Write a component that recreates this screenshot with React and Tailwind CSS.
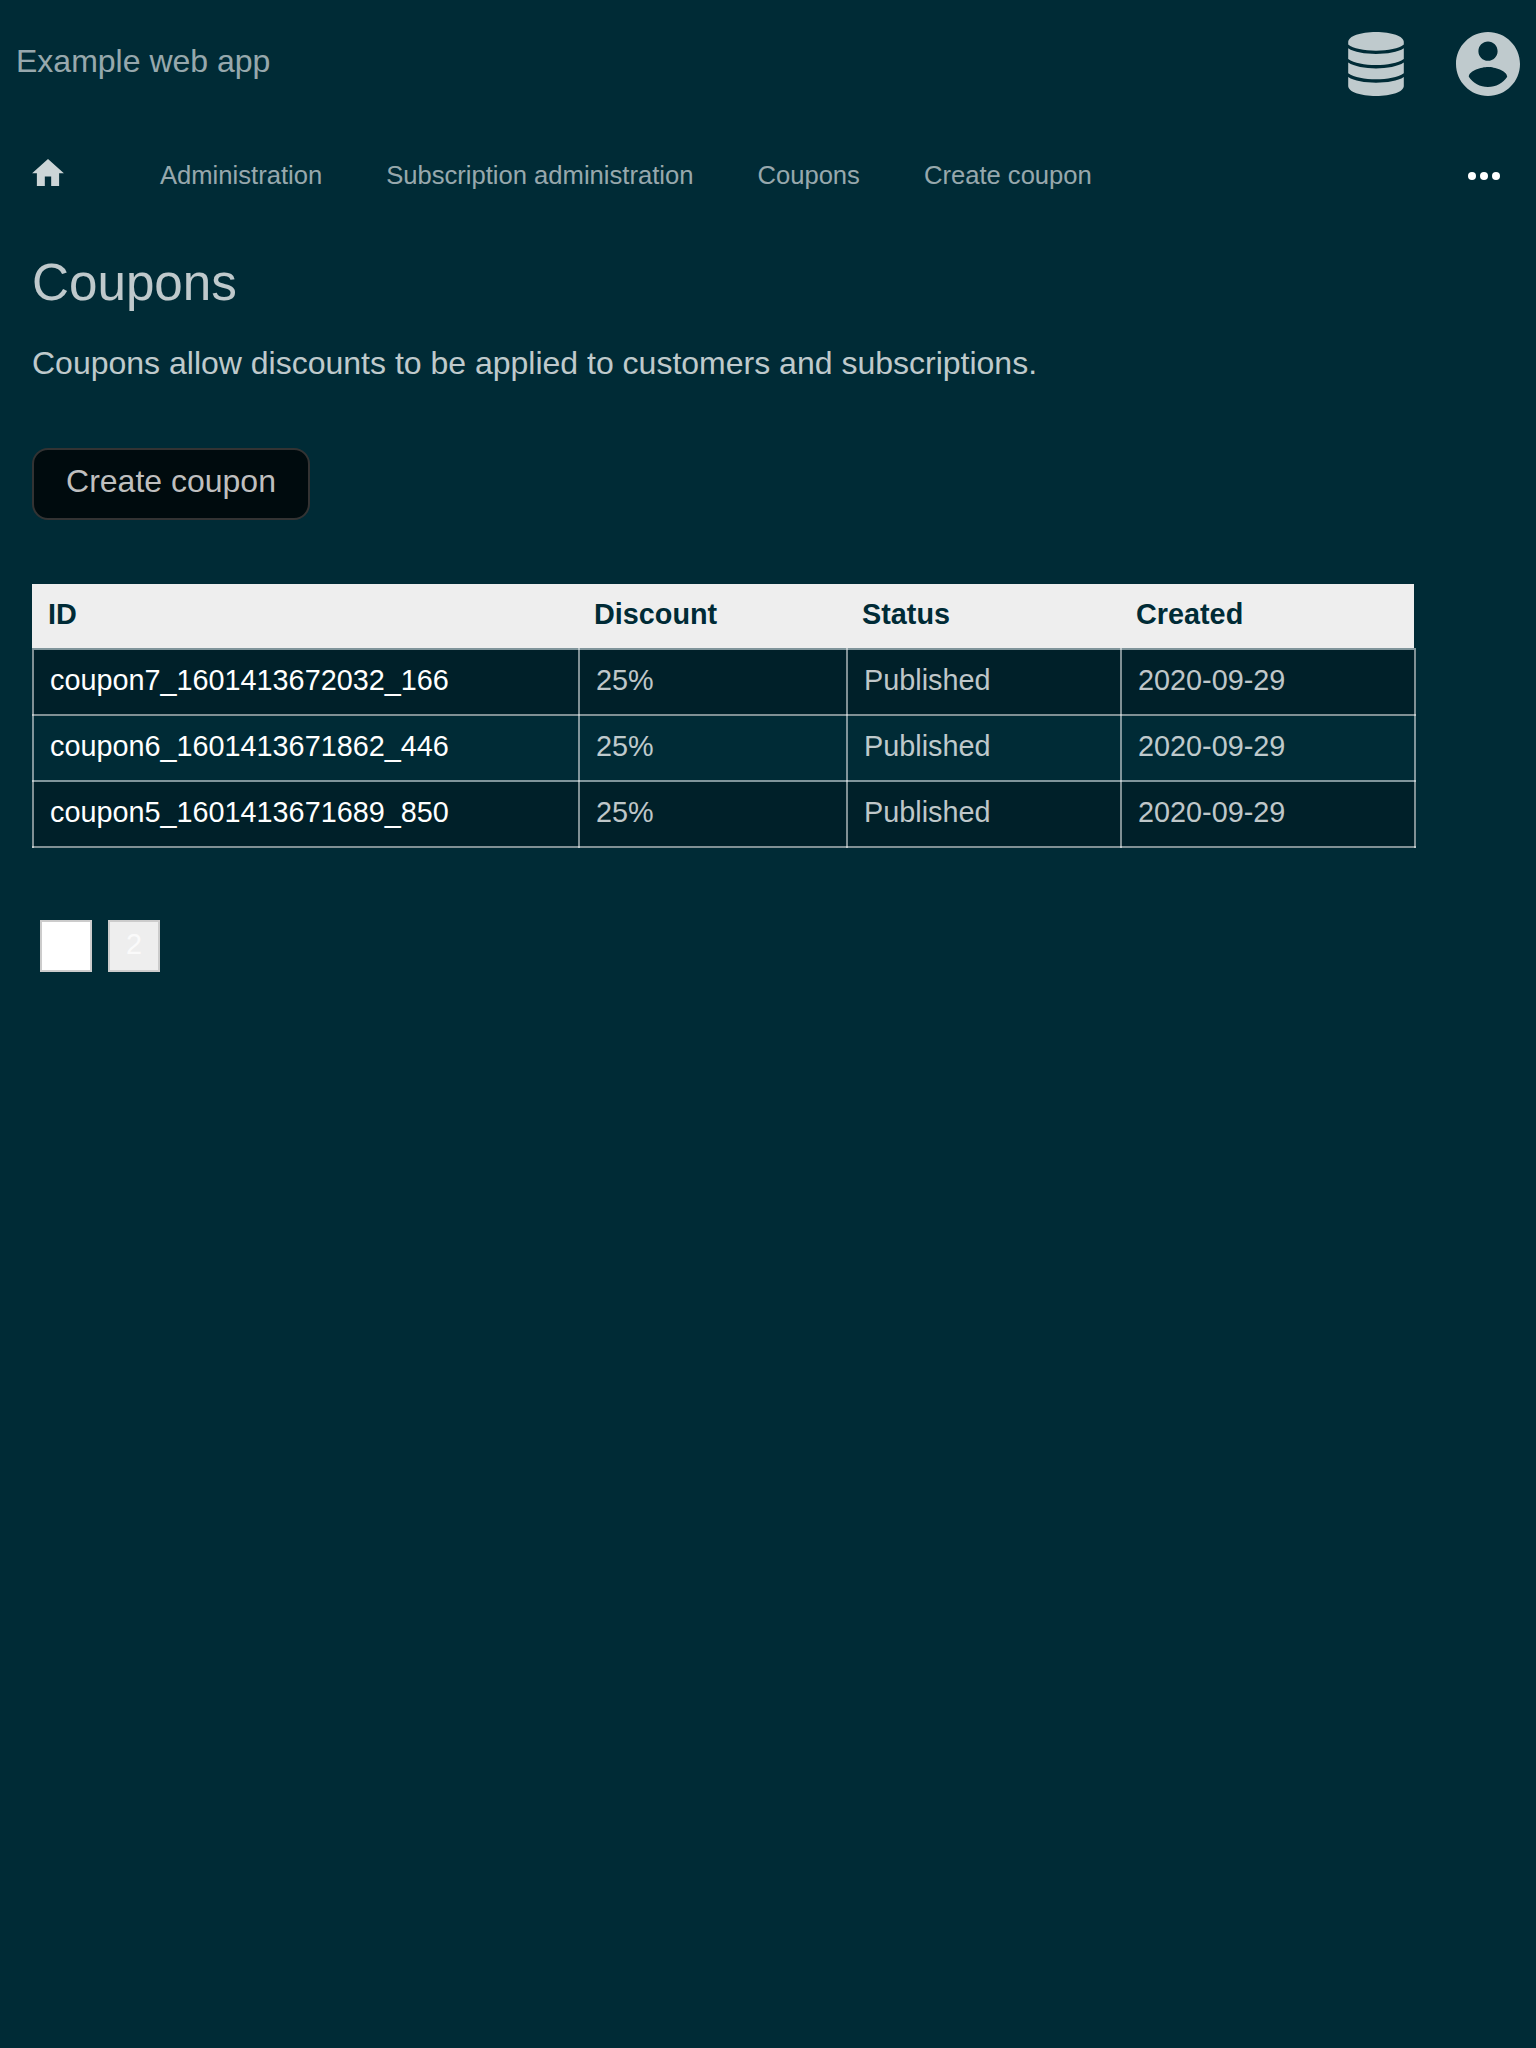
import React from 'react';

const rows = [
  'coupon7_1601413672032_166',
  'coupon6_1601413671862_446',
  'coupon5_1601413671689_850',
];

// Brighter spot where two translucent table lines cross.
function Node({ className }) {
  return <span className={'absolute size-[2px] bg-white/50 ' + className} />;
}

function Cell({ children, first, last, className = '' }) {
  return (
    <div className={'relative border-b-2 border-l-2 border-white/50 pl-4 ' + className}>
      {children}
      <Node className="-bottom-[2px] -left-[2px]" />
      {first && <Node className="-top-[2px] -left-[2px]" />}
      {last && <Node className="-bottom-[2px] -right-[2px]" />}
    </div>
  );
}

const cols = 'grid grid-cols-[546px_268px_274px_296px]';

export default function App() {
  return (
    <div className="min-h-[2048px] w-[1536px] bg-[#002b36] font-['Liberation_Sans',sans-serif] text-[32px] text-white/75">
      <header className="flex h-32 items-center justify-between px-4">
        <div className="-mt-1.5 leading-9 text-white/60">Example web app</div>
        <div className="flex items-center gap-[52px] text-[#bfcacd]">
          <svg className="h-16 w-14" viewBox="0 0 56 64" fill="currentColor">
            <path d="M28 0C43.5 0 55.8 4.2 55.800 10V12.600C51 16.700 40 18.700 28 18.700S5 16.700 0.200 12.600V10C0.200 4.200 12.500 0 28 0Z" />
            <path d="M0.200 16.300C6 20.300 17 22 28 22S50 20.300 55.800 16.300V27C50 31 39 33 28 33S6 31 0.200 27Z" />
            <path d="M0.200 30.600C6 34.600 17 36.400 28 36.400S50 34.600 55.800 30.600V41.300C50 45.300 39 47.300 28 47.300S6 45.300 0.200 41.300Z" />
            <path d="M0.200 45C6 49 17 50.700 28 50.700S50 49 55.800 45V54C55.800 59.800 43.500 64 28 64S0.200 59.800 0.200 54Z" />
          </svg>
          <svg className="size-16" viewBox="2 2 20 20" fill="currentColor">
            <path d="M12 2C6.480 2 2 6.480 2 12s4.480 10 10 10 10-4.480 10-10S17.520 2 12 2zm0 3c1.660 0 3 1.340 3 3s-1.340 3-3 3-3-1.340-3-3 1.340-3 3-3zm0 14.200c-2.500 0-4.710-1.280-6-3.220.030-1.990 4-3.080 6-3.080 1.990 0 5.970 1.090 6 3.080-1.290 1.940-3.500 3.220-6 3.220z" />
          </svg>
        </div>
      </header>
      <nav className="flex h-24 items-center pl-8 pr-9 text-[25.600px] leading-8 text-white/60">
        <svg className="-mt-2 mr-24 h-[27px] w-8 text-[#ccd5d7]" viewBox="2 3 20 17" fill="currentColor">
          <path d="M10 20v-6h4v6h5v-8h3L12 3 2 12h3v8z" />
        </svg>
        <div className="-mt-0.5 flex flex-1 gap-16">
          <span>Administration</span>
          <span>Subscription administration</span>
          <span>Coupons</span>
          <span>Create coupon</span>
        </div>
        <svg className="h-2 w-8 fill-white" viewBox="0 0 32 8">
          <circle cx="4" cy="4" r="4" />
          <circle cx="16" cy="4" r="4" />
          <circle cx="28" cy="4" r="4" />
        </svg>
      </nav>
      <main className="px-8 pt-[29px]">
        <h1 className="text-[51.200px] leading-[60px]">Coupons</h1>
        <p className="mt-8 leading-9">Coupons allow discounts to be applied to customers and subscriptions.</p>
        <button className="mt-[67px] block h-[72px] w-[278px] rounded-2xl border-2 border-[#333] bg-[#000b0e] pb-1.5 text-[#bfbfbf]">
          Create coupon
        </button>
        <div className="mt-16 w-[1384px] text-[28.800px]">
          <div className={cols + ' h-16 w-[1382px] bg-[#eee] font-bold leading-[60px] text-[#002b36]'}>
            <div className="pl-4">ID</div>
            <div className="pl-4">Discount</div>
            <div className="pl-4">Status</div>
            <div className="pl-4">Created</div>
          </div>
          <div className="h-[2px] bg-[#80959b]" />
          {rows.map((id, i) => (
            <div key={id} className={cols + ' h-[66px] leading-[60px] ' + (i === 1 ? '' : 'bg-[#002029]')}>
              <Cell className="text-white">{id}</Cell>
              <Cell first={i === 0}>25%</Cell>
              <Cell first={i === 0}>Published</Cell>
              <Cell first={i === 0} last className="border-r-2">2020-09-29</Cell>
            </div>
          ))}
        </div>
        <div className="mt-[72px] flex gap-4 pl-2 text-[28.800px] text-white/75">
          <div className="h-[52px] w-[52px] border-2 border-[#ccc] bg-white text-center leading-[44px] text-white">1</div>
          <div className="h-[52px] w-[52px] border-2 border-[#ccc] bg-[#eee] text-center leading-[44px]">2</div>
        </div>
      </main>
    </div>
  );
}
